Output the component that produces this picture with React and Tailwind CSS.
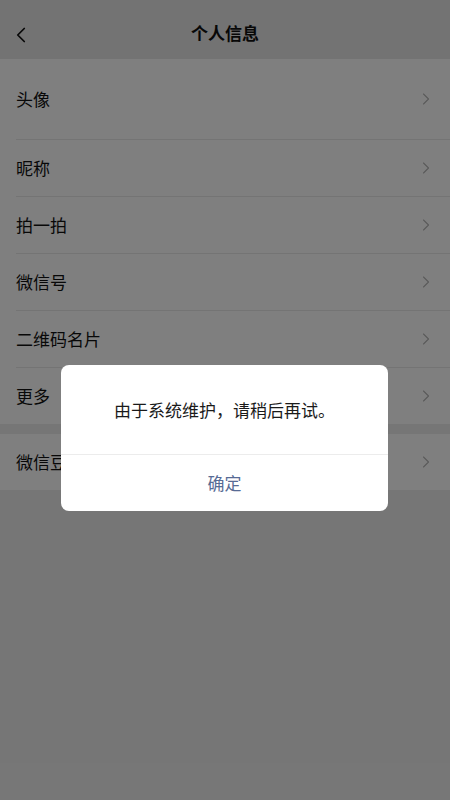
import { ChevronLeft, ChevronRight } from "lucide-react";

const rows = [
    { label: "头像", tall: true },
    { label: "昵称" },
    { label: "拍一拍" },
    { label: "微信号" },
    { label: "二维码名片" },
    { label: "更多", last: true },
];

function Row({ label, tall, last }) {
    return (
        <div className="relative bg-white">
            <div className={`flex items-center justify-between pl-4 pr-[14px] ${tall ? "h-[80px]" : "h-[56px]"}`}>
                <span className="text-[17px] text-[#111]">{label}</span>
                <ChevronRight size={20} strokeWidth={1.3} className="text-[#b4b4b4]" />
            </div>
            {!last && <div className="ml-4 h-px bg-[#e8e8e8]" />}
        </div>
    );
}

export default function App() {
    return (
        <div
            className="relative h-[800px] w-[450px] overflow-hidden bg-[#ededed]"
            style={{ fontFamily: '"Noto Sans CJK SC", "Noto Sans", sans-serif' }}
        >
            <div className="relative flex h-[59px] items-center justify-center bg-[#e6e6e6] pt-[7px]">
                <ChevronLeft size={26} strokeWidth={1.6} className="absolute left-[8px] top-[22px] text-[#111]" />
                <span className="text-[17px] font-bold text-[#111]">个人信息</span>
            </div>

            <div className="flex flex-col">
                {rows.map((r) => (
                    <Row key={r.label} {...r} />
                ))}
            </div>

            <div className="mt-[10px]">
                <Row label="微信豆" last />
            </div>

            {/* mask + dialog */}
            <div className="absolute inset-0 bg-black/50">
                <div className="absolute left-[61px] top-[365px] w-[327px] overflow-hidden rounded-lg bg-white">
                    <div className="flex h-[89px] items-center justify-center px-6">
                        <p className="text-[17px] text-[#1a1a1a]">由于系统维护，请稍后再试。</p>
                    </div>
                    <div className="h-px bg-[#ececec]" />
                    <button className="flex h-[56px] w-full items-center justify-center text-[17px] text-[#576b95]">
                        确定
                    </button>
                </div>
            </div>
        </div>
    );
}
